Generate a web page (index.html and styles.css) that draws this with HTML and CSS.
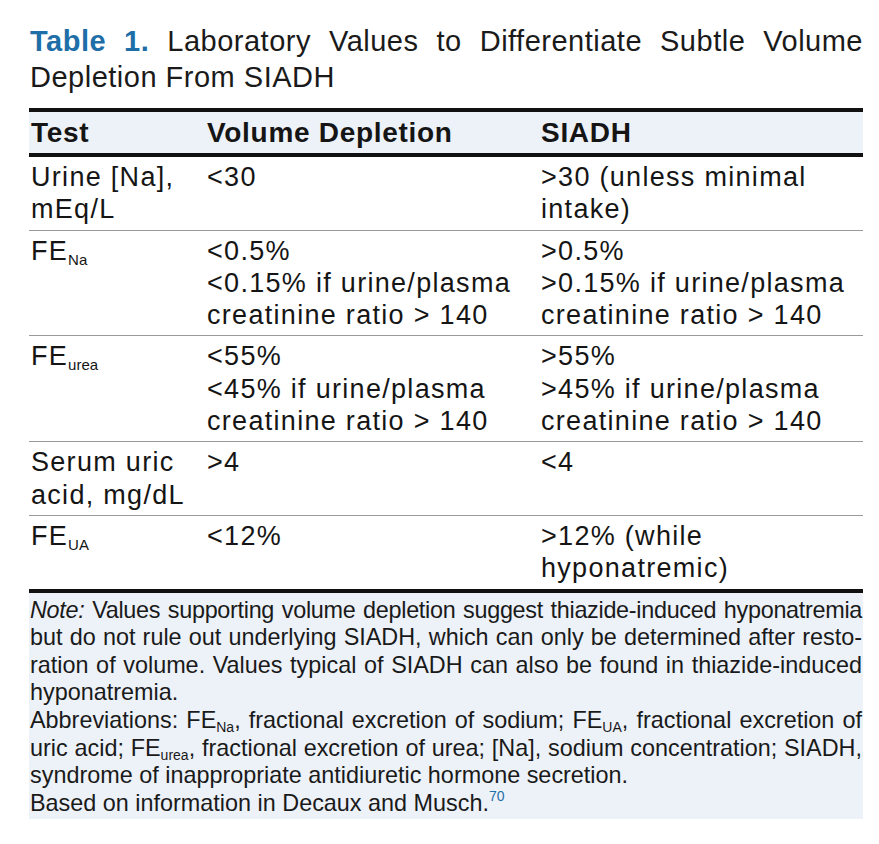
FILE: index.html
```html
<!DOCTYPE html>
<html>
<head>
<meta charset="utf-8">
<link rel="stylesheet" href="styles.css">
</head>
<body>
<div class="panel">
  <div class="title">
    <div class="jline"><span class="label">Table 1.</span> Laboratory Values to Differentiate Subtle Volume</div>
    <div>Depletion From SIADH</div>
  </div>
  <div class="tbl">
    <div class="row head">
      <div class="cell">Test</div>
      <div class="cell">Volume Depletion</div>
      <div class="cell">SIADH</div>
    </div>
    <div class="row">
      <div class="cell">Urine [Na],<br>mEq/L</div>
      <div class="cell">&lt;30</div>
      <div class="cell">&gt;30 (unless minimal<br>intake)</div>
    </div>
    <div class="row">
      <div class="cell">FE<sub>Na</sub></div>
      <div class="cell">&lt;0.5%<br>&lt;0.15% if urine/plasma<br>creatinine ratio &gt; 140</div>
      <div class="cell">&gt;0.5%<br>&gt;0.15% if urine/plasma<br>creatinine ratio &gt; 140</div>
    </div>
    <div class="row">
      <div class="cell">FE<sub>urea</sub></div>
      <div class="cell">&lt;55%<br>&lt;45% if urine/plasma<br>creatinine ratio &gt; 140</div>
      <div class="cell">&gt;55%<br>&gt;45% if urine/plasma<br>creatinine ratio &gt; 140</div>
    </div>
    <div class="row">
      <div class="cell">Serum uric<br>acid, mg/dL</div>
      <div class="cell">&gt;4</div>
      <div class="cell">&lt;4</div>
    </div>
    <div class="row last">
      <div class="cell">FE<sub>UA</sub></div>
      <div class="cell">&lt;12%</div>
      <div class="cell">&gt;12% (while<br>hyponatremic)</div>
    </div>
  </div>
  <div class="notes">
    <div class="jline tight"><i>Note:</i> Values supporting volume depletion suggest thiazide-induced hyponatremia</div>
    <div class="jline">but do not rule out underlying SIADH, which can only be determined after resto-</div>
    <div class="jline">ration of volume. Values typical of SIADH can also be found in thiazide-induced</div>
    <div>hyponatremia.</div>
    <div class="jline">Abbreviations: FE<sub>Na</sub>, fractional excretion of sodium; FE<sub>UA</sub>, fractional excretion of</div>
    <div class="jline">uric acid; FE<sub>urea</sub>, fractional excretion of urea; [Na], sodium concentration; SIADH,</div>
    <div>syndrome of inappropriate antidiuretic hormone secretion.</div>
    <div>Based on information in Decaux and Musch.<sup class="ref">70</sup></div>
  </div>
</div>
</body>
</html>
```

FILE: styles.css
```css
html, body {
  margin: 0;
  padding: 0;
  background: #ffffff;
}

body {
  font-family: "Liberation Sans", Arial, sans-serif;
  color: #151515;
}

.panel {
  margin-left: 29px;
  width: 834px;
}

.title {
  padding-top: 23px;
  padding-left: 1px;
  font-size: 29px;
  line-height: 36px;
  letter-spacing: 0.5px;
  color: #1a1a1a;
}

.jline {
  text-align: justify;
  text-align-last: justify;
}

.tight {
  letter-spacing: -0.3px;
  word-spacing: -3px;
}

.label {
  color: #1e6ea8;
  font-weight: bold;
}

.tbl {
  margin-top: 13px;
  border-top: 4px solid #111;
}

.row {
  display: grid;
  grid-template-columns: 176px 334px 1fr;
  border-bottom: 1px solid #9a9a9a;
  padding: 4px 0 4px;
  font-size: 27px;
  line-height: 32.3px;
  letter-spacing: 1.3px;
}

.row .cell {
  padding-left: 2px;
}

.row.head {
  background: #edf1f8;
  border-bottom: 4px solid #111;
  font-weight: bold;
  font-size: 28px;
  letter-spacing: 0.7px;
  padding: 4px 0 4px;
  line-height: 33px;
}

.row.last {
  border-bottom: 4px solid #111;
}

sub {
  font-size: 15px;
  letter-spacing: 0;
  vertical-align: -5px;
  line-height: 0;
}

.notes {
  background: #edf2f9;
  padding: 4px 1px 2px 1px;
  font-size: 23.4px;
  line-height: 27.6px;
  color: #1a1a1a;
}

.notes sub {
  font-size: 14px;
  vertical-align: -4px;
}

.ref {
  color: #1e6ea8;
  font-size: 14px;
  vertical-align: 10px;
  line-height: 0;
}
```
